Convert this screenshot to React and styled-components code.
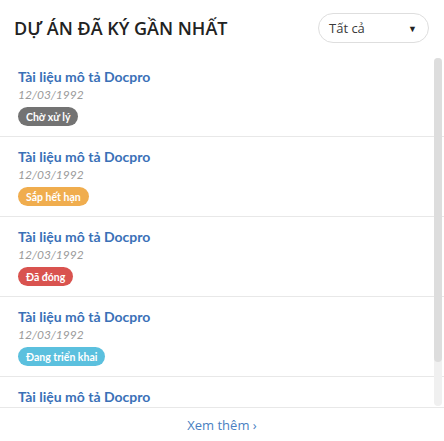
import React from 'react'
import styled, { createGlobalStyle } from 'styled-components'

const GlobalStyle = createGlobalStyle`
  * { box-sizing: border-box; }
  body {
    margin: 0;
    background: #ffffff;
    font-family: 'Open Sans', 'Noto Sans', sans-serif;
  }
`

const Card = styled.div`
  width: 444px;
  height: 441px;
  display: flex;
  flex-direction: column;
  background: #ffffff;
`

const Header = styled.div`
  display: flex;
  align-items: center;
  justify-content: space-between;
  padding: 13px 15px 14px 14px;
`

const Title = styled.h2`
  margin: 0;
  font-size: 18px;
  font-weight: 600;
  color: #222222;
`

const Select = styled.div`
  width: 111px;
  height: 30px;
  border: 1px solid #dedede;
  border-radius: 15px;
  display: flex;
  align-items: center;
  justify-content: space-between;
  padding: 0 11px 0 10px;
  font-size: 13px;
  color: #3a3a3a;
`

const Caret = styled.span`
  font-size: 9px;
  color: #222222;
`

const ListWrap = styled.div`
  position: relative;
  height: 350px;
`

const List = styled.div`
  height: 100%;
  overflow: hidden;
`

/* scrollbar drawn over the list's right edge */
const ScrollTrack = styled.div`
  position: absolute;
  top: 1px;
  bottom: 1px;
  right: 2px;
  width: 8px;
  border-radius: 4px;
  background: #f0f0f0;
`

const ScrollThumb = styled.div`
  height: 304px;
  border-radius: 4px;
  background: #dddddd;
`

const Item = styled.div`
  padding: 11px 18px 10px;
  border-bottom: 1px solid #e8e8e8;
`

const ItemTitle = styled.div`
  font-family: 'Lato', sans-serif;
  font-size: 14px;
  line-height: 17px;
  font-weight: 700;
  color: #3a70b7;
`

const Date = styled.div`
  font-family: 'Lato', sans-serif;
  font-size: 12px;
  line-height: 16px;
  font-style: italic;
  color: #9a9a9a;
  margin-top: 2px;
`

const colors = {
  pending: '#737373',
  warning: '#f0ad4e',
  closed: '#d9534f',
  active: '#5bc0de',
}

const Badge = styled.span`
  display: inline-flex;
  align-items: center;
  height: 19px;
  margin-top: 4px;
  padding: 0 8px;
  border-radius: 10px;
  background: ${p => colors[p.$type]};
  color: #ffffff;
  font-family: 'Lato', sans-serif;
  font-size: 10.5px;
  font-weight: 700;
`

const Footer = styled.div`
  border-top: 1px solid #e8e8e8;
  flex: 1;
  display: flex;
  align-items: center;
  justify-content: center;
  font-size: 13px;
  color: #4a7fc2;
`

const items = [
  { status: 'Chờ xử lý', type: 'pending' },
  { status: 'Sắp hết hạn', type: 'warning' },
  { status: 'Đã đóng', type: 'closed' },
  { status: 'Đang triển khai', type: 'active' },
  { status: 'Chờ xử lý', type: 'pending' },
]

export default function App() {
  return (
    <>
      <GlobalStyle />
      <Card>
        <Header>
          <Title>DỰ ÁN ĐÃ KÝ GẦN NHẤT</Title>
          <Select>
            Tất cả
            <Caret>▼</Caret>
          </Select>
        </Header>
        <ListWrap>
          <List>
            {items.map((it, i) => (
              <Item key={i}>
                <ItemTitle>Tài liệu mô tả Docpro</ItemTitle>
                <Date>12/03/1992</Date>
                <Badge $type={it.type}>{it.status}</Badge>
              </Item>
            ))}
          </List>
          <ScrollTrack>
            <ScrollThumb />
          </ScrollTrack>
        </ListWrap>
        <Footer>Xem thêm ›</Footer>
      </Card>
    </>
  )
}
